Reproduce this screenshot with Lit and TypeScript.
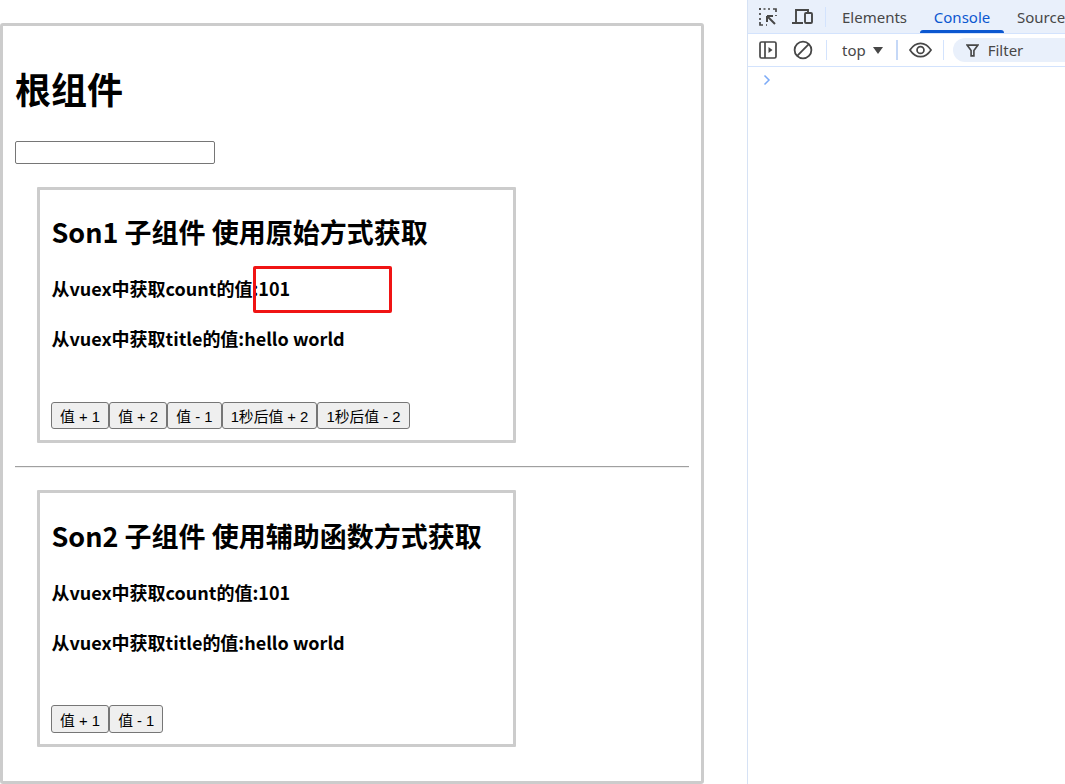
import { LitElement, html, css } from "lit";
import { customElement } from "lit/decorators.js";

@customElement("son-box")
class SonBox extends LitElement {
  static properties = { heading: {}, buttons: { type: Array }, marked: { type: Boolean } };
  heading = "";
  buttons: string[] = [];
  marked = false;
  static styles = css`
    :host { display: block; }
    .box { position: relative; width: 479px; box-sizing: border-box; margin-left: 22px; border: 3px solid #ccc; padding: 0 11px 11px; border-radius: 1px; }
    h2 { font-size: 27px; line-height: 40px; font-weight: 700; margin: 0 0 0 0.5px; padding-top: 22px; }
    h3 { font-size: 18px; line-height: 27px; font-weight: 700; margin: 0 0 0 0.5px; }
    .first { margin-top: 23px; }
    .second { margin-top: 23px; }
    .btns { display: flex; margin-top: 50px; }
    button { font-family: "Liberation Sans", "Noto Sans CJK SC", sans-serif; font-size: 14.8px; height: 27px; padding: 0 8.1px; border: 1px solid #767676; border-radius: 3px; background: #efefef; color: #000; white-space: nowrap; }
    :host(.s2) h2 { padding-top: 23px; }
    :host(.s2) .btns { margin-top: 49px; }
    :host(.s2) button { height: 28px; }
    .mark { position: absolute; left: 213px; top: 76px; width: 139px; height: 47px; box-sizing: border-box; border: 3px solid #f01414; border-radius: 2px; }
  `;
  render() {
    return html`<div class="box">
      <h2>${this.heading}</h2>
      <h3 class="first">从vuex中获取count的值:101</h3>
      <h3 class="second">从vuex中获取title的值:hello world</h3>
      <div class="btns">${this.buttons.map((b) => html`<button>${b}</button>`)}</div>
      ${this.marked ? html`<div class="mark"></div>` : ""}
    </div>`;
  }
}

@customElement("app-root")
class AppRoot extends LitElement {
  static styles = css`
    :host { display: flex; width: 1065px; height: 784px; overflow: hidden; background: #fff; font-family: "Noto Sans CJK SC", sans-serif; color: #000; }
    .page { width: 747px; flex: none; padding: 23px 0 0 0; box-sizing: border-box; }
    .root { width: 704px; height: 761px; box-sizing: border-box; border: 3px solid #ccc; border-radius: 3px; padding: 0 12px; }
    h1 { font-size: 36px; line-height: 46px; font-weight: 700; margin: 0; padding-top: 39px; }
    input { display: block; box-sizing: border-box; width: 200px; height: 23px; margin: 30px 0 0; padding: 1px 2px; border: 1px solid #767676; border-radius: 2px; background: #fff; }
    .s1 { margin-top: 23px; }
    hr { margin: 23px 0 22px; border: 0; border-top: 1px solid #a0a0a0; border-bottom: 1px solid #eee; height: 0; }
    .dev { flex: 1; min-width: 0; border-left: 1px solid #d6e2f5; font-family: "Noto Sans", "Liberation Sans", sans-serif; font-size: 15px; color: #474747; }
    .bar1 { display: flex; align-items: center; height: 34px; box-sizing: border-box; background: #e9f0fb; border-bottom: 1px solid #d3e3fd; white-space: nowrap; overflow: hidden; }
    .bar2 { display: flex; align-items: center; height: 33px; box-sizing: border-box; background: #fff; border-bottom: 1px solid #d3e3fd; white-space: nowrap; overflow: hidden; }
    .ic { flex: none; display: block; }
    .i1 { margin-left: 10px; }
    .i2 { margin-left: 14px; }
    .sep { flex: none; width: 1px; height: 20px; background: #d3e3fd; }
    .tab { position: relative; flex: none; height: 33px; line-height: 34px; padding: 0 13px; }
    .tab.first { margin-left: 3px; }
    .tab.on { color: #0b57d0; padding: 0 13px; width: 58px; text-align: center; }
    .tab.on::after { content: ""; position: absolute; left: 0; right: 0; bottom: 0; height: 3px; background: #0b57d0; border-radius: 3px 3px 0 0; }
    .top { flex: none; margin-left: 15px; }
    .pill { flex: none; display: flex; align-items: center; gap: 9px; width: 130px; height: 24px; margin-left: 9px; padding-left: 13px; box-sizing: border-box; background: #e9f0fb; border-radius: 12px 0 0 12px; }
    .prompt { padding: 7px 0 0 15px; }
  `;
  render() {
    return html`
      <div class="page">
        <div class="root">
          <h1>根组件</h1>
          <input />
          <son-box class="s1" .heading=${"Son1 子组件 使用原始方式获取"} .buttons=${["值 + 1", "值 + 2", "值 - 1", "1秒后值 + 2", "1秒后值 - 2"]} .marked=${true}></son-box>
          <hr />
          <son-box class="s2" .heading=${"Son2 子组件 使用辅助函数方式获取"} .buttons=${["值 + 1", "值 - 1"]}></son-box>
        </div>
      </div>
      <div class="dev">
        <div class="bar1">
          <svg class="ic i1" width="20" height="20" viewBox="0 0 20 20" fill="none" stroke="#474747" stroke-width="1.7"><path d="M1 2h2M5.500 2h2M10 2h2M15 2h3v3M2 1v2M2 6v2M2 11v2M2 15v3h3M18 8v1M8 18h1"/><path d="M9 9l8 8M9 9h6M9 9v6" stroke-width="2"/></svg>
          <svg class="ic i2" width="22" height="20" viewBox="0 0 22 20" fill="none" stroke="#474747" stroke-width="1.9"><path d="M4 15V3h12v2"/><path d="M0 16h11" stroke-width="2"/><rect x="13" y="6" width="7" height="10" rx="1"/></svg>
          <div class="sep" style="margin-left:11px"></div>
          <div class="tab first">Elements</div>
          <div class="tab on">Console</div>
          <div class="tab">Sources</div>
        </div>
        <div class="bar2">
          <svg class="ic" style="margin-left:11px" width="18" height="18" viewBox="0 0 18 18" fill="none" stroke="#474747" stroke-width="1.7"><rect x="1" y="1" width="16" height="16" rx="1.500"/><path d="M6 1v16"/><path d="M9.500 6l4 3-4 3z" fill="#474747" stroke="none"/></svg>
          <svg class="ic" style="margin-left:16px" width="20" height="20" viewBox="0 0 20 20" fill="none" stroke="#474747" stroke-width="1.8"><circle cx="10" cy="10" r="8.400"/><path d="M4.200 15.800L15.800 4.200"/></svg>
          <div class="sep" style="margin-left:13px"></div>
          <div class="top">top</div>
          <svg class="ic" style="margin-left:7px" width="10" height="7" viewBox="0 0 10 7"><path d="M0 0h10L5 7z" fill="#474747"/></svg>
          <div class="sep" style="margin-left:13px;background:#c5d8f7;width:2px"></div>
          <svg class="ic" style="margin-left:11px" width="23" height="16" viewBox="0 0 24 16" fill="none" stroke="#474747" stroke-width="1.800"><path d="M1 8c3-4.500 6.800-7 11-7s8 2.500 11 7c-3 4.500-6.800 7-11 7S4 12.500 1 8z"/><circle cx="12" cy="8" r="3.600"/></svg>
          <div class="sep" style="margin-left:11px"></div>
          <div class="pill">
            <svg class="ic" width="13" height="13" viewBox="0 0 12 12" fill="none" stroke="#474747" stroke-width="1.500"><path d="M1 1h10L7.300 6v5H4.700V6z"/></svg>
            <span>Filter</span>
          </div>
        </div>
        <div class="prompt"><svg class="ic" width="8" height="12" viewBox="0 0 8 12" fill="none" stroke="#7baaf7" stroke-width="1.500"><path d="M1.500 1.500L6 6l-4.500 4.500"/></svg></div>
      </div>`;
  }
}
void SonBox; void AppRoot;
